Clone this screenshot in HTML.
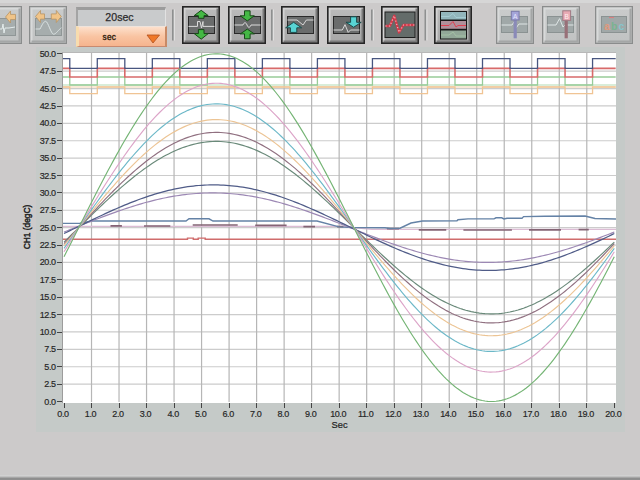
<!DOCTYPE html>
<html><head><meta charset="utf-8">
<style>
*{margin:0;padding:0;box-sizing:border-box}
html,body{width:640px;height:480px;overflow:hidden;background:#cccaca;font-family:"Liberation Sans",sans-serif;position:relative}
.abs{position:absolute}
.topband{left:0;top:0;width:640px;height:3px;background:#d6d6d6}
.panel{left:36.3px;top:47px;width:588.7px;height:384.6px;background:#c5cac8}
.bottom{left:0;top:474.5px;width:640px;height:5.5px;background:linear-gradient(#d2d2d2 0px,#d0d0d0 1px,#b2b2b2 2px,#8e8e8e 3.5px,#888 4.2px,#a6a6a6 5.5px)}
.ylab{position:absolute;left:27.6px;width:28px;text-align:right;font-size:9px;letter-spacing:-0.4px;color:#262626;line-height:10px;-webkit-text-stroke:0.18px #262626}
.ytick{position:absolute;left:57.1px;width:4.9px;height:1px;background:#444}
.xlab{position:absolute;top:408.8px;width:30px;text-align:center;font-size:9px;letter-spacing:-0.4px;color:#262626;line-height:10px;-webkit-text-stroke:0.18px #262626}
.xtick{position:absolute;top:403.4px;width:1px;height:5px;background:#444}
</style></head><body>
<div class="abs topband"></div>
<div class="abs panel"></div>
<div class="abs bottom"></div>
<svg class="abs" style="left:0;top:0" width="640" height="50" viewBox="0 0 640 50"><defs><linearGradient id="g" x1="0" y1="0" x2="0" y2="1"><stop offset="0" stop-color="#bcbcbc"/><stop offset="1" stop-color="#a6a6a6"/></linearGradient><linearGradient id="gd" x1="0" y1="0" x2="0" y2="1"><stop offset="0" stop-color="#cacccc"/><stop offset="1" stop-color="#c0c2c2"/></linearGradient><linearGradient id="og" x1="0" y1="0" x2="0" y2="1"><stop offset="0" stop-color="#fcdcc4"/><stop offset="1" stop-color="#f8b48a"/></linearGradient></defs><rect x="-16" y="6" width="38" height="38" fill="url(#gd)"/><path d="M-13.5,42V8.5H20" stroke="#d8dada" stroke-width="2" fill="none"/><path d="M19.5,8.5V41.5H-13.5" stroke="#a4a6a6" stroke-width="2" fill="none"/><rect x="-15.4" y="6.6" width="36.8" height="36.8" fill="none" stroke="#8a8c8c" stroke-width="1.2"/><rect x="-1.5" y="18.5" width="17" height="17" fill="#a6adad" stroke="#8f9696" stroke-width="1"/><path d="M-2,29 L2,29 L3,24 L4,33 L5,28 L9,28 L15,27" stroke="#e4ecec" stroke-width="1" fill="none"/><polygon points="5.5,17.0 10.5,11.0 10.5,14.4 15.5,14.4 15.5,19.6 10.5,19.6 10.5,23.0" fill="#f0c488" stroke="#b89464" stroke-width="0.8" stroke-linejoin="round"/><rect x="29" y="6" width="38" height="38" fill="url(#gd)"/><path d="M31.5,42V8.5H65" stroke="#d8dada" stroke-width="2" fill="none"/><path d="M64.5,8.5V41.5H31.5" stroke="#a4a6a6" stroke-width="2" fill="none"/><rect x="29.6" y="6.6" width="36.8" height="36.8" fill="none" stroke="#8a8c8c" stroke-width="1.2"/><rect x="35.5" y="18.5" width="26" height="17" fill="#a6adad" stroke="#8f9696" stroke-width="1"/><path d="M35.5,29 L40,29 C42,25 44,21 45.7,21.3 C48,21.5 51,34 53.5,34.2 C56,34.4 59,29 61.5,27.8" stroke="#e0e8e8" stroke-width="0.9" fill="none"/><polygon points="35.5,16.5 40.5,10.5 40.5,13.9 44.5,13.9 44.5,19.1 40.5,19.1 40.5,22.5" fill="#f0c488" stroke="#b89464" stroke-width="0.8" stroke-linejoin="round"/><polygon points="61.3,16.5 56.3,10.5 56.3,13.9 51.3,13.9 51.3,19.1 56.3,19.1 56.3,22.5" fill="#f0c488" stroke="#b89464" stroke-width="0.8" stroke-linejoin="round"/><rect x="172.0" y="9.5" width="1.8" height="31" fill="#8e9090"/><rect x="173.8" y="9.5" width="1.2" height="31" fill="#e0e0e0"/><rect x="182" y="6" width="38" height="38" fill="url(#g)"/><path d="M184.5,42V8.5H218" stroke="#d4d4d4" stroke-width="2" fill="none"/><path d="M217.5,8.5V41.5H184.5" stroke="#7a7a7a" stroke-width="2" fill="none"/><rect x="182.8" y="6.8" width="36.4" height="36.4" fill="none" stroke="#262626" stroke-width="1.6"/><rect x="188.5" y="16.5" width="26" height="17" fill="#6a6c6c" stroke="#2a2a2a" stroke-width="1"/><path d="M188.5,26.4 H197.5 V21.5 H200 L201.5,28 L203,21.5 V26.4 H214.5" stroke="#dcdcdc" stroke-width="1" fill="none"/><polygon points="201.2,10.3 208.2,15.6 204.0,15.6 204.0,18.3 198.4,18.3 198.4,15.6 194.2,15.6" fill="#44b844" stroke="#184818" stroke-width="1" stroke-linejoin="round"/><polygon points="201.2,39.2 208.2,33.6 204.0,33.6 204.0,29.6 198.4,29.6 198.4,33.6 194.2,33.6" fill="#44b844" stroke="#184818" stroke-width="1" stroke-linejoin="round"/><rect x="228" y="6" width="38" height="38" fill="url(#g)"/><path d="M230.5,42V8.5H264" stroke="#d4d4d4" stroke-width="2" fill="none"/><path d="M263.5,8.5V41.5H230.5" stroke="#7a7a7a" stroke-width="2" fill="none"/><rect x="228.8" y="6.8" width="36.4" height="36.4" fill="none" stroke="#262626" stroke-width="1.6"/><rect x="234.5" y="16.5" width="26" height="17" fill="#6a6c6c" stroke="#2a2a2a" stroke-width="1"/><path d="M234.5,25 H243 C244,22 246,22 247,25 C248,28 250,28 251,25 H260.5" stroke="#dcdcdc" stroke-width="1" fill="none"/><polygon points="247.3,20.9 254.3,15.8 250.1,15.8 250.1,10.8 244.5,10.8 244.5,15.8 240.3,15.8" fill="#44b844" stroke="#184818" stroke-width="1" stroke-linejoin="round"/><polygon points="247.3,29.1 254.3,33.9 250.1,33.9 250.1,38.8 244.5,38.8 244.5,33.9 240.3,33.9" fill="#44b844" stroke="#184818" stroke-width="1" stroke-linejoin="round"/><rect x="271.0" y="9.5" width="1.8" height="31" fill="#8e9090"/><rect x="272.8" y="9.5" width="1.2" height="31" fill="#e0e0e0"/><rect x="281" y="6" width="38" height="38" fill="url(#g)"/><path d="M283.5,42V8.5H317" stroke="#d4d4d4" stroke-width="2" fill="none"/><path d="M316.5,8.5V41.5H283.5" stroke="#7a7a7a" stroke-width="2" fill="none"/><rect x="281.8" y="6.8" width="36.4" height="36.4" fill="none" stroke="#262626" stroke-width="1.6"/><rect x="287.5" y="16.5" width="26" height="17" fill="#6a6c6c" stroke="#2a2a2a" stroke-width="1"/><path d="M287.5,20 H297 L303,25 L306.4,20 H313.5" stroke="#d8d8d8" stroke-width="1" fill="none"/><polygon points="293.6,22.3 301.6,27.8 296.8,27.8 296.8,32.4 290.4,32.4 290.4,27.8 285.6,27.8" fill="#58d4d4" stroke="#1c4a4a" stroke-width="1" stroke-linejoin="round"/><rect x="327" y="6" width="38" height="38" fill="url(#g)"/><path d="M329.5,42V8.5H363" stroke="#d4d4d4" stroke-width="2" fill="none"/><path d="M362.5,8.5V41.5H329.5" stroke="#7a7a7a" stroke-width="2" fill="none"/><rect x="327.8" y="6.8" width="36.4" height="36.4" fill="none" stroke="#262626" stroke-width="1.6"/><rect x="333.5" y="16.5" width="26" height="17" fill="#6a6c6c" stroke="#2a2a2a" stroke-width="1"/><path d="M333.5,30 H342.3 L345,24.6 L348.2,32.4 L350.5,30 H359.5" stroke="#d8d8d8" stroke-width="1" fill="none"/><polygon points="353.6,27.3 361.2,22.3 356.6,22.3 356.6,16.8 350.6,16.8 350.6,22.3 346.0,22.3" fill="#58d4d4" stroke="#1c4a4a" stroke-width="1" stroke-linejoin="round"/><rect x="371.0" y="9.5" width="1.8" height="31" fill="#8e9090"/><rect x="372.8" y="9.5" width="1.2" height="31" fill="#e0e0e0"/><rect x="381" y="6" width="38" height="38" fill="url(#g)"/><path d="M383.5,42V8.5H417" stroke="#d4d4d4" stroke-width="2" fill="none"/><path d="M416.5,8.5V41.5H383.5" stroke="#7a7a7a" stroke-width="2" fill="none"/><rect x="381.8" y="6.8" width="36.4" height="36.4" fill="none" stroke="#262626" stroke-width="1.6"/><rect x="385.0" y="12.0" width="30.0" height="25.5" fill="#646c6a" stroke="#1e1e1e" stroke-width="1"/><path d="M385.5,26 H389.8 L394.3,15.8 L399,32.4 L403.5,25 H414.5" stroke="#d23a4a" stroke-width="2.4" fill="none" stroke-linejoin="round"/><path d="M385.5,26 H389.8 L394.3,15.8 L399,32.4 L403.5,25 H414.5" stroke="#f6c4cc" stroke-width="1.1" fill="none" stroke-dasharray="1.1 2.3"/><rect x="424.5" y="9.5" width="1.8" height="31" fill="#8e9090"/><rect x="426.3" y="9.5" width="1.2" height="31" fill="#e0e0e0"/><rect x="434" y="6" width="38" height="38" fill="url(#g)"/><path d="M436.5,42V8.5H470" stroke="#d4d4d4" stroke-width="2" fill="none"/><path d="M469.5,8.5V41.5H436.5" stroke="#7a7a7a" stroke-width="2" fill="none"/><rect x="434.8" y="6.8" width="36.4" height="36.4" fill="none" stroke="#262626" stroke-width="1.6"/><rect x="440" y="11" width="27" height="28.5" fill="#181818"/><rect x="441" y="12" width="25" height="7.5" fill="#92b6bc"/><rect x="441" y="21" width="25" height="7.8" fill="#b0909a"/><rect x="441" y="30.5" width="25" height="8" fill="#92a898"/><path d="M441,25.5 H449 L453,21.5 L456,27 L458,25.5 H466" stroke="#e04050" stroke-width="1" fill="none"/><path d="M441,16.5 H449 L453,13.5 L456,17.5 H466" stroke="#a8d0d8" stroke-width="0.8" fill="none"/><path d="M441,35 H449 L453,32 L456,36 H466" stroke="#a8c8a8" stroke-width="0.8" fill="none"/><rect x="496" y="6" width="38" height="38" fill="url(#gd)"/><path d="M498.5,42V8.5H532" stroke="#d8dada" stroke-width="2" fill="none"/><path d="M531.5,8.5V41.5H498.5" stroke="#a4a6a6" stroke-width="2" fill="none"/><rect x="496.6" y="6.6" width="36.8" height="36.8" fill="none" stroke="#8a8c8c" stroke-width="1.2"/><rect x="501.5" y="16.5" width="26" height="16" fill="#a0a8a8" stroke="#8a9292" stroke-width="1"/><path d="M501.5,25 H512 L514,22 M516,28 L519,24 H527.5" stroke="#dfe6e6" stroke-width="1" fill="none"/><rect x="513.6" y="19" width="3.2" height="19.3" fill="#8a8ab8"/><rect x="511.3" y="11.3" width="7.8" height="8.7" fill="#a4a4d8" stroke="#7a7aa8" stroke-width="1"/><text x="515.2" y="18.5" font-size="6.5" text-anchor="middle" fill="#e8e8ff" font-family="Liberation Sans">A</text><rect x="542" y="6" width="38" height="38" fill="url(#gd)"/><path d="M544.5,42V8.5H578" stroke="#d8dada" stroke-width="2" fill="none"/><path d="M577.5,8.5V41.5H544.5" stroke="#a4a6a6" stroke-width="2" fill="none"/><rect x="542.6" y="6.6" width="36.8" height="36.8" fill="none" stroke="#8a8c8c" stroke-width="1.2"/><rect x="547.5" y="16.5" width="26" height="16" fill="#a0a8a8" stroke="#8a9292" stroke-width="1"/><path d="M547.5,25 H556 L559.6,18.6 L563,27 L565,25 H573.5" stroke="#dfe6e6" stroke-width="1" fill="none"/><rect x="564.6" y="19" width="3.2" height="19.3" fill="#987078"/><rect x="562.8" y="10.8" width="7.8" height="9.6" fill="#e8aab4" stroke="#a07a84" stroke-width="1"/><text x="566.7" y="18.5" font-size="6.5" text-anchor="middle" fill="#fff0f0" font-family="Liberation Sans">B</text><rect x="595" y="6" width="38" height="38" fill="url(#gd)"/><path d="M597.5,42V8.5H631" stroke="#d8dada" stroke-width="2" fill="none"/><path d="M630.5,8.5V41.5H597.5" stroke="#a4a6a6" stroke-width="2" fill="none"/><rect x="595.6" y="6.6" width="36.8" height="36.8" fill="none" stroke="#8a8c8c" stroke-width="1.2"/><rect x="601.5" y="16.5" width="25" height="16" fill="#a0a8a8" stroke="#8a9292" stroke-width="1"/><text x="604" y="29.5" font-size="10.5" fill="#e0987c" font-family="Liberation Sans" font-weight="bold">a</text><text x="611" y="29.5" font-size="10.5" fill="#78b490" font-family="Liberation Sans" font-weight="bold">b</text><text x="618.5" y="29.5" font-size="10.5" fill="#88c4cc" font-family="Liberation Sans" font-weight="bold">c</text><path d="M609,17.5 H614" stroke="#d88080" stroke-width="1.2"/></svg><div class="abs" style="left:76px;top:7px;width:90px;height:20px;background:#c9cbcc;border-top:3px solid #9c9c9c;border-left:2.5px solid #a4a4a4;border-right:1.5px solid #e2e2e2"></div>
<div class="abs" style="left:74.5px;top:9.3px;width:90px;height:17px;font-size:10.6px;color:#2c2c2c;text-align:center;line-height:17px;-webkit-text-stroke:0.25px #2c2c2c">20sec</div>
<div class="abs" style="left:75.5px;top:26px;width:91px;height:21px;background:linear-gradient(#fde0cc,#f9c4a2 50%,#f6b48e);border-left:3px solid #f8dcae;border-right:2px solid #c88a66;border-bottom:1.2px solid #c88a70;border-top:1px solid #efe4dc"></div>
<div class="abs" style="left:102.6px;top:32px;width:20px;font-size:8.2px;letter-spacing:0.2px;color:#2e1c0c;line-height:12px;-webkit-text-stroke:0.35px #2e1c0c">sec</div>
<svg class="abs" style="left:0;top:0" width="640" height="50"><polygon points="147,35 159.5,35 153,43" fill="#f07828" stroke="#b05020" stroke-width="0.8"/></svg>
<div class="abs" style="left:62.4px;top:52px;width:553.4px;height:350.5px;background:#fff;border-left:1.3px solid #9c9c9c;border-top:1px solid #b8b8b8"></div>
<svg class="abs" style="left:0;top:0" width="640" height="480" viewBox="0 0 640 480">
<defs><clipPath id="c"><rect x="63" y="53" width="553" height="349"/></clipPath></defs>
<g clip-path="url(#c)">
<path d="M63,384.12H616 M63,366.73H616 M63,349.35H616 M63,331.96H616 M63,314.57H616 M63,297.19H616 M63,279.81H616 M63,262.42H616 M63,245.03H616 M63,227.65H616 M63,210.27H616 M63,192.88H616 M63,175.50H616 M63,158.11H616 M63,140.73H616 M63,123.34H616 M63,105.95H616 M63,88.57H616 M63,71.19H616" stroke="#cccccc" stroke-width="1.2" fill="none"/>
<path d="M91.52,53V403 M119.03,53V403 M146.55,53V403 M174.06,53V403 M201.57,53V403 M229.09,53V403 M256.61,53V403 M284.12,53V403 M311.63,53V403 M339.15,53V403 M366.67,53V403 M394.18,53V403 M421.69,53V403 M449.21,53V403 M476.73,53V403 M504.24,53V403 M531.75,53V403 M559.27,53V403 M586.78,53V403" stroke="#b6b6b6" stroke-width="1.2" fill="none"/>
<path d="M63,85.0H616" stroke="#b4dcb4" stroke-width="1.2" fill="none"/><path d="M63,87.0H616" stroke="#f4d4b0" stroke-width="1.2" fill="none"/>
<path d="M62.62,87.00 V87.00 H69.78 V93.60 H97.29 V87.00 H124.81 V93.60 H152.32 V87.00 H179.84 V93.60 H207.35 V87.00 H234.87 V93.60 H262.38 V87.00 H289.90 V93.60 H317.41 V87.00 H344.93 V93.60 H372.44 V87.00 H399.96 V93.60 H427.47 V87.00 H454.99 V93.60 H482.50 V87.00 H510.02 V93.60 H537.53 V87.00 H565.05 V93.60 H592.56 V87.00 H615.68" stroke="#f0c494" stroke-width="1.3" fill="none"/>
<path d="M62.62,77.00 V77.00 H69.78 V85.00 H97.29 V77.00 H124.81 V85.00 H152.32 V77.00 H179.84 V85.00 H207.35 V77.00 H234.87 V85.00 H262.38 V77.00 H289.90 V85.00 H317.41 V77.00 H344.93 V85.00 H372.44 V77.00 H399.96 V85.00 H427.47 V77.00 H454.99 V85.00 H482.50 V77.00 H510.02 V85.00 H537.53 V77.00 H565.05 V85.00 H592.56 V77.00 H615.68" stroke="#98cc98" stroke-width="1.3" fill="none"/>
<path d="M62.62,68.40 V68.40 H69.78 V77.00 H97.29 V68.40 H124.81 V77.00 H152.32 V68.40 H179.84 V77.00 H207.35 V68.40 H234.87 V77.00 H262.38 V68.40 H289.90 V77.00 H317.41 V68.40 H344.93 V77.00 H372.44 V68.40 H399.96 V77.00 H427.47 V68.40 H454.99 V77.00 H482.50 V68.40 H510.02 V77.00 H537.53 V68.40 H565.05 V77.00 H592.56 V68.40 H615.68" stroke="#d86a6a" stroke-width="1.6" fill="none"/>
<path d="M62.62,58.60 V58.60 H69.78 V68.40 H97.29 V58.60 H124.81 V68.40 H152.32 V58.60 H179.84 V68.40 H207.35 V58.60 H234.87 V68.40 H262.38 V58.60 H289.90 V68.40 H317.41 V58.60 H344.93 V68.40 H372.44 V58.60 H399.96 V68.40 H427.47 V58.60 H454.99 V68.40 H482.50 V58.60 H510.02 V68.40 H537.53 V58.60 H565.05 V68.40 H592.56 V58.60 H615.68" stroke="#485680" stroke-width="1.3" fill="none"/>
<path d="M63,239.2H187.5V238.1H193.3V239.2H198.2V238.1H205.2V239.2H616" stroke="#d06c6c" stroke-width="1.4" fill="none"/>
<path d="M63,226.3H340L372,229.3H616" stroke="#dcbcd4" stroke-width="1.3" fill="none"/>
<path d="M110.5,225.9H121.9 M144,226.0H170.3 M192.7,225.0H237.7 M255.2,225.4H286.6 M303.4,226.6H315 M337,226.6H343.4 M387,228.6H399 M418.75,229.8H446.25 M463.4,230.0H511.9 M529,229.8H561 M578.6,229.6H588.75" stroke="#846474" stroke-width="1.7" fill="none"/>
<path d="M63,223.4 L80,223.3 L92,221 L186,221 L189,218.8 L209,218.8 L213,221 L317,221 L339,226.9 L353,227.5 L385,227.8 L390,228.5 L400,228.2 L411,223 L422.5,221 L457,220.8 L458,219.7 L468,218.9 L494,218.9 L496,217.8 L501.7,217.8 L504,218.9 L507,218.2 L522,218.2 L523.6,216.6 L545,216.2 L585,216 L595,218.5 L616,219" stroke="#6482a6" stroke-width="1.4" fill="none"/>
<path d="M64.00,232.01 L66.75,230.92 L69.50,229.83 L72.25,228.74 L75.01,227.65 L77.76,226.56 L80.51,225.47 L83.26,224.38 L86.01,223.29 L88.76,222.21 L91.52,221.13 L94.27,220.07 L97.02,219.00 L99.77,217.95 L102.52,216.91 L105.27,215.87 L108.02,214.85 L110.78,213.84 L113.53,212.85 L116.28,211.86 L119.03,210.90 L121.78,209.95 L124.53,209.02 L127.28,208.11 L130.04,207.21 L132.79,206.34 L135.54,205.49 L138.29,204.66 L141.04,203.85 L143.79,203.06 L146.55,202.30 L149.30,201.57 L152.05,200.86 L154.80,200.18 L157.55,199.52 L160.30,198.89 L163.05,198.29 L165.81,197.72 L168.56,197.18 L171.31,196.67 L174.06,196.19 L176.81,195.74 L179.56,195.32 L182.31,194.94 L185.07,194.58 L187.82,194.26 L190.57,193.97 L193.32,193.72 L196.07,193.50 L198.82,193.31 L201.57,193.15 L204.33,193.03 L207.08,192.95 L209.83,192.90 L212.58,192.88 L215.33,192.90 L218.08,192.95 L220.84,193.03 L223.59,193.15 L226.34,193.31 L229.09,193.50 L231.84,193.72 L234.59,193.97 L237.34,194.26 L240.10,194.58 L242.85,194.94 L245.60,195.32 L248.35,195.74 L251.10,196.19 L253.85,196.67 L256.61,197.18 L259.36,197.72 L262.11,198.29 L264.86,198.89 L267.61,199.52 L270.36,200.18 L273.11,200.86 L275.87,201.57 L278.62,202.30 L281.37,203.06 L284.12,203.85 L286.87,204.66 L289.62,205.49 L292.37,206.34 L295.13,207.21 L297.88,208.11 L300.63,209.02 L303.38,209.95 L306.13,210.90 L308.88,211.86 L311.63,212.85 L314.39,213.84 L317.14,214.85 L319.89,215.87 L322.64,216.91 L325.39,217.95 L328.14,219.00 L330.90,220.07 L333.65,221.13 L336.40,222.21 L339.15,223.29 L341.90,224.38 L344.65,225.47 L347.40,226.56 L350.16,227.65 L352.91,228.74 L355.66,229.83 L358.41,230.92 L361.16,232.01 L363.91,233.09 L366.67,234.17 L369.42,235.23 L372.17,236.30 L374.92,237.35 L377.67,238.39 L380.42,239.43 L383.17,240.45 L385.93,241.46 L388.68,242.45 L391.43,243.44 L394.18,244.40 L396.93,245.35 L399.68,246.28 L402.43,247.19 L405.19,248.09 L407.94,248.96 L410.69,249.81 L413.44,250.64 L416.19,251.45 L418.94,252.24 L421.69,253.00 L424.45,253.73 L427.20,254.44 L429.95,255.12 L432.70,255.78 L435.45,256.41 L438.20,257.01 L440.96,257.58 L443.71,258.12 L446.46,258.63 L449.21,259.11 L451.96,259.56 L454.71,259.98 L457.46,260.36 L460.22,260.72 L462.97,261.04 L465.72,261.33 L468.47,261.58 L471.22,261.80 L473.97,261.99 L476.73,262.15 L479.48,262.27 L482.23,262.35 L484.98,262.40 L487.73,262.42 L490.48,262.40 L493.23,262.35 L495.99,262.27 L498.74,262.15 L501.49,261.99 L504.24,261.80 L506.99,261.58 L509.74,261.33 L512.49,261.04 L515.25,260.72 L518.00,260.36 L520.75,259.98 L523.50,259.56 L526.25,259.11 L529.00,258.63 L531.75,258.12 L534.51,257.58 L537.26,257.01 L540.01,256.41 L542.76,255.78 L545.51,255.12 L548.26,254.44 L551.02,253.73 L553.77,253.00 L556.52,252.24 L559.27,251.45 L562.02,250.64 L564.77,249.81 L567.52,248.96 L570.28,248.09 L573.03,247.19 L575.78,246.28 L578.53,245.35 L581.28,244.40 L584.03,243.44 L586.78,242.45 L589.54,241.46 L592.29,240.45 L595.04,239.43 L597.79,238.39 L600.54,237.35 L603.29,236.30 L606.05,235.23 L608.80,234.17 L611.55,233.09 L614.30,232.01" stroke="#9c88b4" stroke-width="1.15" fill="none"/>
<path d="M64.00,233.54 L66.75,232.21 L69.50,230.87 L72.25,229.53 L75.01,228.19 L77.76,226.84 L80.51,225.50 L83.26,224.16 L86.01,222.82 L88.76,221.49 L91.52,220.16 L94.27,218.85 L97.02,217.54 L99.77,216.24 L102.52,214.95 L105.27,213.67 L108.02,212.41 L110.78,211.16 L113.53,209.93 L116.28,208.71 L119.03,207.52 L121.78,206.34 L124.53,205.19 L127.28,204.06 L130.04,202.95 L132.79,201.86 L135.54,200.81 L138.29,199.77 L141.04,198.77 L143.79,197.79 L146.55,196.84 L149.30,195.93 L152.05,195.04 L154.80,194.19 L157.55,193.37 L160.30,192.58 L163.05,191.83 L165.81,191.12 L168.56,190.43 L171.31,189.79 L174.06,189.19 L176.81,188.62 L179.56,188.09 L182.31,187.60 L185.07,187.15 L187.82,186.73 L190.57,186.36 L193.32,186.03 L196.07,185.74 L198.82,185.50 L201.57,185.29 L204.33,185.13 L207.08,185.00 L209.83,184.92 L212.58,184.89 L215.33,184.89 L218.08,184.94 L220.84,185.03 L223.59,185.16 L226.34,185.33 L229.09,185.54 L231.84,185.80 L234.59,186.10 L237.34,186.43 L240.10,186.81 L242.85,187.23 L245.60,187.69 L248.35,188.19 L251.10,188.73 L253.85,189.30 L256.61,189.92 L259.36,190.57 L262.11,191.26 L264.86,191.98 L267.61,192.74 L270.36,193.53 L273.11,194.36 L275.87,195.22 L278.62,196.11 L281.37,197.03 L284.12,197.98 L286.87,198.97 L289.62,199.98 L292.37,201.02 L295.13,202.08 L297.88,203.17 L300.63,204.28 L303.38,205.42 L306.13,206.58 L308.88,207.76 L311.63,208.96 L314.39,210.17 L317.14,211.41 L319.89,212.66 L322.64,213.92 L325.39,215.20 L328.14,216.49 L330.90,217.80 L333.65,219.11 L336.40,220.43 L339.15,221.76 L341.90,223.09 L344.65,224.43 L347.40,225.77 L350.16,227.11 L352.91,228.46 L355.66,229.80 L358.41,231.14 L361.16,232.48 L363.91,233.81 L366.67,235.14 L369.42,236.45 L372.17,237.76 L374.92,239.06 L377.67,240.35 L380.42,241.63 L383.17,242.89 L385.93,244.14 L388.68,245.37 L391.43,246.59 L394.18,247.78 L396.93,248.96 L399.68,250.11 L402.43,251.24 L405.19,252.35 L407.94,253.44 L410.69,254.49 L413.44,255.53 L416.19,256.53 L418.94,257.51 L421.69,258.46 L424.45,259.37 L427.20,260.26 L429.95,261.11 L432.70,261.93 L435.45,262.72 L438.20,263.47 L440.96,264.18 L443.71,264.87 L446.46,265.51 L449.21,266.11 L451.96,266.68 L454.71,267.21 L457.46,267.70 L460.22,268.15 L462.97,268.57 L465.72,268.94 L468.47,269.27 L471.22,269.56 L473.97,269.80 L476.73,270.01 L479.48,270.17 L482.23,270.30 L484.98,270.38 L487.73,270.41 L490.48,270.41 L493.23,270.36 L495.99,270.27 L498.74,270.14 L501.49,269.97 L504.24,269.76 L506.99,269.50 L509.74,269.20 L512.49,268.87 L515.25,268.49 L518.00,268.07 L520.75,267.61 L523.50,267.11 L526.25,266.57 L529.00,266.00 L531.75,265.38 L534.51,264.73 L537.26,264.04 L540.01,263.32 L542.76,262.56 L545.51,261.77 L548.26,260.94 L551.02,260.08 L553.77,259.19 L556.52,258.27 L559.27,257.32 L562.02,256.33 L564.77,255.32 L567.52,254.28 L570.28,253.22 L573.03,252.13 L575.78,251.02 L578.53,249.88 L581.28,248.72 L584.03,247.54 L586.78,246.34 L589.54,245.13 L592.29,243.89 L595.04,242.64 L597.79,241.38 L600.54,240.10 L603.29,238.81 L606.05,237.50 L608.80,236.19 L611.55,234.87 L614.30,233.54" stroke="#505c88" stroke-width="1.25" fill="none"/>
<path d="M64.00,242.07 L66.75,239.40 L69.50,236.71 L72.25,234.01 L75.01,231.31 L77.76,228.60 L80.51,225.89 L83.26,223.18 L86.01,220.48 L88.76,217.78 L91.52,215.10 L94.27,212.42 L97.02,209.77 L99.77,207.13 L102.52,204.50 L105.27,201.91 L108.02,199.33 L110.78,196.79 L113.53,194.28 L116.28,191.80 L119.03,189.35 L121.78,186.94 L124.53,184.57 L127.28,182.25 L130.04,179.97 L132.79,177.74 L135.54,175.55 L138.29,173.42 L141.04,171.34 L143.79,169.32 L146.55,167.35 L149.30,165.44 L152.05,163.60 L154.80,161.82 L157.55,160.10 L160.30,158.45 L163.05,156.87 L165.81,155.36 L168.56,153.92 L171.31,152.55 L174.06,151.25 L176.81,150.04 L179.56,148.89 L182.31,147.83 L185.07,146.84 L187.82,145.94 L190.57,145.11 L193.32,144.37 L196.07,143.71 L198.82,143.13 L201.57,142.64 L204.33,142.22 L207.08,141.90 L209.83,141.66 L212.58,141.50 L215.33,141.43 L218.08,141.44 L220.84,141.54 L223.59,141.72 L226.34,141.99 L229.09,142.34 L231.84,142.78 L234.59,143.30 L237.34,143.90 L240.10,144.58 L242.85,145.35 L245.60,146.20 L248.35,147.13 L251.10,148.14 L253.85,149.23 L256.61,150.39 L259.36,151.63 L262.11,152.95 L264.86,154.34 L267.61,155.80 L270.36,157.34 L273.11,158.94 L275.87,160.61 L278.62,162.35 L281.37,164.15 L284.12,166.01 L286.87,167.93 L289.62,169.92 L292.37,171.96 L295.13,174.05 L297.88,176.20 L300.63,178.40 L303.38,180.65 L306.13,182.94 L308.88,185.28 L311.63,187.66 L314.39,190.08 L317.14,192.54 L319.89,195.03 L322.64,197.55 L325.39,200.10 L328.14,202.68 L330.90,205.29 L333.65,207.92 L336.40,210.56 L339.15,213.23 L341.90,215.90 L344.65,218.59 L347.40,221.29 L350.16,223.99 L352.91,226.70 L355.66,229.41 L358.41,232.12 L361.16,234.82 L363.91,237.52 L366.67,240.20 L369.42,242.88 L372.17,245.53 L374.92,248.17 L377.67,250.80 L380.42,253.39 L383.17,255.97 L385.93,258.51 L388.68,261.02 L391.43,263.50 L394.18,265.95 L396.93,268.36 L399.68,270.73 L402.43,273.05 L405.19,275.33 L407.94,277.56 L410.69,279.75 L413.44,281.88 L416.19,283.96 L418.94,285.98 L421.69,287.95 L424.45,289.86 L427.20,291.70 L429.95,293.48 L432.70,295.20 L435.45,296.85 L438.20,298.43 L440.96,299.94 L443.71,301.38 L446.46,302.75 L449.21,304.05 L451.96,305.26 L454.71,306.41 L457.46,307.47 L460.22,308.46 L462.97,309.36 L465.72,310.19 L468.47,310.93 L471.22,311.59 L473.97,312.17 L476.73,312.66 L479.48,313.08 L482.23,313.40 L484.98,313.64 L487.73,313.80 L490.48,313.87 L493.23,313.86 L495.99,313.76 L498.74,313.58 L501.49,313.31 L504.24,312.96 L506.99,312.52 L509.74,312.00 L512.49,311.40 L515.25,310.72 L518.00,309.95 L520.75,309.10 L523.50,308.17 L526.25,307.16 L529.00,306.07 L531.75,304.91 L534.51,303.67 L537.26,302.35 L540.01,300.96 L542.76,299.50 L545.51,297.96 L548.26,296.36 L551.02,294.69 L553.77,292.95 L556.52,291.15 L559.27,289.29 L562.02,287.37 L564.77,285.38 L567.52,283.34 L570.28,281.25 L573.03,279.10 L575.78,276.90 L578.53,274.65 L581.28,272.36 L584.03,270.02 L586.78,267.64 L589.54,265.22 L592.29,262.76 L595.04,260.27 L597.79,257.75 L600.54,255.20 L603.29,252.62 L606.05,250.01 L608.80,247.38 L611.55,244.74 L614.30,242.07" stroke="#6a8a7a" stroke-width="1.15" fill="none"/>
<path d="M64.00,243.59 L66.75,240.63 L69.50,237.66 L72.25,234.68 L75.01,231.69 L77.76,228.70 L80.51,225.70 L83.26,222.71 L86.01,219.73 L88.76,216.75 L91.52,213.78 L94.27,210.83 L97.02,207.89 L99.77,204.97 L102.52,202.08 L105.27,199.21 L108.02,196.37 L110.78,193.55 L113.53,190.78 L116.28,188.04 L119.03,185.33 L121.78,182.67 L124.53,180.06 L127.28,177.49 L130.04,174.97 L132.79,172.50 L135.54,170.09 L138.29,167.73 L141.04,165.44 L143.79,163.20 L146.55,161.03 L149.30,158.92 L152.05,156.88 L154.80,154.92 L157.55,153.02 L160.30,151.20 L163.05,149.45 L165.81,147.78 L168.56,146.19 L171.31,144.67 L174.06,143.24 L176.81,141.90 L179.56,140.64 L182.31,139.46 L185.07,138.37 L187.82,137.37 L190.57,136.46 L193.32,135.64 L196.07,134.91 L198.82,134.27 L201.57,133.72 L204.33,133.27 L207.08,132.91 L209.83,132.64 L212.58,132.47 L215.33,132.39 L218.08,132.40 L220.84,132.51 L223.59,132.71 L226.34,133.01 L229.09,133.39 L231.84,133.88 L234.59,134.45 L237.34,135.12 L240.10,135.88 L242.85,136.72 L245.60,137.66 L248.35,138.69 L251.10,139.80 L253.85,141.01 L256.61,142.29 L259.36,143.66 L262.11,145.12 L264.86,146.65 L267.61,148.27 L270.36,149.96 L273.11,151.73 L275.87,153.58 L278.62,155.50 L281.37,157.49 L284.12,159.55 L286.87,161.67 L289.62,163.86 L292.37,166.12 L295.13,168.43 L297.88,170.81 L300.63,173.24 L303.38,175.72 L306.13,178.26 L308.88,180.84 L311.63,183.47 L314.39,186.14 L317.14,188.85 L319.89,191.61 L322.64,194.39 L325.39,197.22 L328.14,200.07 L330.90,202.94 L333.65,205.85 L336.40,208.77 L339.15,211.71 L341.90,214.67 L344.65,217.64 L347.40,220.62 L350.16,223.61 L352.91,226.60 L355.66,229.60 L358.41,232.59 L361.16,235.57 L363.91,238.55 L366.67,241.52 L369.42,244.47 L372.17,247.41 L374.92,250.33 L377.67,253.22 L380.42,256.09 L383.17,258.93 L385.93,261.75 L388.68,264.52 L391.43,267.26 L394.18,269.97 L396.93,272.63 L399.68,275.24 L402.43,277.81 L405.19,280.33 L407.94,282.80 L410.69,285.21 L413.44,287.57 L416.19,289.86 L418.94,292.10 L421.69,294.27 L424.45,296.38 L427.20,298.42 L429.95,300.38 L432.70,302.28 L435.45,304.10 L438.20,305.85 L440.96,307.52 L443.71,309.11 L446.46,310.63 L449.21,312.06 L451.96,313.40 L454.71,314.66 L457.46,315.84 L460.22,316.93 L462.97,317.93 L465.72,318.84 L468.47,319.66 L471.22,320.39 L473.97,321.03 L476.73,321.58 L479.48,322.03 L482.23,322.39 L484.98,322.66 L487.73,322.83 L490.48,322.91 L493.23,322.90 L495.99,322.79 L498.74,322.59 L501.49,322.29 L504.24,321.91 L506.99,321.42 L509.74,320.85 L512.49,320.18 L515.25,319.42 L518.00,318.58 L520.75,317.64 L523.50,316.61 L526.25,315.50 L529.00,314.29 L531.75,313.01 L534.51,311.64 L537.26,310.18 L540.01,308.65 L542.76,307.03 L545.51,305.34 L548.26,303.57 L551.02,301.72 L553.77,299.80 L556.52,297.81 L559.27,295.75 L562.02,293.63 L564.77,291.44 L567.52,289.18 L570.28,286.87 L573.03,284.49 L575.78,282.06 L578.53,279.58 L581.28,277.04 L584.03,274.46 L586.78,271.83 L589.54,269.16 L592.29,266.45 L595.04,263.69 L597.79,260.91 L600.54,258.08 L603.29,255.23 L606.05,252.36 L608.80,249.45 L611.55,246.53 L614.30,243.59" stroke="#907080" stroke-width="1.15" fill="none"/>
<path d="M64.00,245.73 L66.75,242.37 L69.50,239.00 L72.25,235.62 L75.01,232.23 L77.76,228.84 L80.51,225.44 L83.26,222.05 L86.01,218.66 L88.76,215.29 L91.52,211.92 L94.27,208.57 L97.02,205.24 L99.77,201.93 L102.52,198.64 L105.27,195.39 L108.02,192.16 L110.78,188.98 L113.53,185.83 L116.28,182.72 L119.03,179.65 L121.78,176.63 L124.53,173.67 L127.28,170.75 L130.04,167.89 L132.79,165.10 L135.54,162.36 L138.29,159.69 L141.04,157.08 L143.79,154.54 L146.55,152.08 L149.30,149.69 L152.05,147.38 L154.80,145.15 L157.55,143.00 L160.30,140.93 L163.05,138.94 L165.81,137.05 L168.56,135.24 L171.31,133.53 L174.06,131.91 L176.81,130.38 L179.56,128.95 L182.31,127.62 L185.07,126.38 L187.82,125.25 L190.57,124.21 L193.32,123.28 L196.07,122.45 L198.82,121.73 L201.57,121.11 L204.33,120.59 L207.08,120.18 L209.83,119.88 L212.58,119.68 L215.33,119.59 L218.08,119.61 L220.84,119.73 L223.59,119.96 L226.34,120.29 L229.09,120.74 L231.84,121.28 L234.59,121.93 L237.34,122.69 L240.10,123.55 L242.85,124.51 L245.60,125.58 L248.35,126.74 L251.10,128.01 L253.85,129.37 L256.61,130.83 L259.36,132.39 L262.11,134.03 L264.86,135.78 L267.61,137.61 L270.36,139.53 L273.11,141.54 L275.87,143.63 L278.62,145.81 L281.37,148.07 L284.12,150.40 L286.87,152.81 L289.62,155.30 L292.37,157.86 L295.13,160.48 L297.88,163.17 L300.63,165.93 L303.38,168.75 L306.13,171.62 L308.88,174.55 L311.63,177.53 L314.39,180.57 L317.14,183.64 L319.89,186.77 L322.64,189.93 L325.39,193.13 L328.14,196.36 L330.90,199.63 L333.65,202.92 L336.40,206.23 L339.15,209.57 L341.90,212.93 L344.65,216.30 L347.40,219.68 L350.16,223.07 L352.91,226.46 L355.66,229.86 L358.41,233.25 L361.16,236.64 L363.91,240.01 L366.67,243.38 L369.42,246.73 L372.17,250.06 L374.92,253.37 L377.67,256.66 L380.42,259.91 L383.17,263.14 L385.93,266.32 L388.68,269.47 L391.43,272.58 L394.18,275.65 L396.93,278.67 L399.68,281.63 L402.43,284.55 L405.19,287.41 L407.94,290.20 L410.69,292.94 L413.44,295.61 L416.19,298.22 L418.94,300.76 L421.69,303.22 L424.45,305.61 L427.20,307.92 L429.95,310.15 L432.70,312.30 L435.45,314.37 L438.20,316.36 L440.96,318.25 L443.71,320.06 L446.46,321.77 L449.21,323.39 L451.96,324.92 L454.71,326.35 L457.46,327.68 L460.22,328.92 L462.97,330.05 L465.72,331.09 L468.47,332.02 L471.22,332.85 L473.97,333.57 L476.73,334.19 L479.48,334.71 L482.23,335.12 L484.98,335.42 L487.73,335.62 L490.48,335.71 L493.23,335.69 L495.99,335.57 L498.74,335.34 L501.49,335.01 L504.24,334.56 L506.99,334.02 L509.74,333.37 L512.49,332.61 L515.25,331.75 L518.00,330.79 L520.75,329.72 L523.50,328.56 L526.25,327.29 L529.00,325.93 L531.75,324.47 L534.51,322.91 L537.26,321.27 L540.01,319.52 L542.76,317.69 L545.51,315.77 L548.26,313.76 L551.02,311.67 L553.77,309.49 L556.52,307.23 L559.27,304.90 L562.02,302.49 L564.77,300.00 L567.52,297.44 L570.28,294.82 L573.03,292.13 L575.78,289.37 L578.53,286.55 L581.28,283.68 L584.03,280.75 L586.78,277.77 L589.54,274.73 L592.29,271.66 L595.04,268.53 L597.79,265.37 L600.54,262.17 L603.29,258.94 L606.05,255.67 L608.80,252.38 L611.55,249.07 L614.30,245.73" stroke="#ecc494" stroke-width="1.15" fill="none"/>
<path d="M64.00,248.36 L66.75,244.51 L69.50,240.65 L72.25,236.78 L75.01,232.90 L77.76,229.01 L80.51,225.12 L83.26,221.24 L86.01,217.36 L88.76,213.49 L91.52,209.63 L94.27,205.79 L97.02,201.98 L99.77,198.19 L102.52,194.43 L105.27,190.70 L108.02,187.00 L110.78,183.35 L113.53,179.74 L116.28,176.18 L119.03,172.67 L121.78,169.21 L124.53,165.82 L127.28,162.48 L130.04,159.20 L132.79,156.00 L135.54,152.86 L138.29,149.80 L141.04,146.82 L143.79,143.91 L146.55,141.09 L149.30,138.35 L152.05,135.71 L154.80,133.15 L157.55,130.68 L160.30,128.31 L163.05,126.04 L165.81,123.87 L168.56,121.81 L171.31,119.84 L174.06,117.98 L176.81,116.24 L179.56,114.60 L182.31,113.07 L185.07,111.65 L187.82,110.35 L190.57,109.17 L193.32,108.10 L196.07,107.15 L198.82,106.32 L201.57,105.61 L204.33,105.02 L207.08,104.55 L209.83,104.21 L212.58,103.98 L215.33,103.88 L218.08,103.89 L220.84,104.04 L223.59,104.30 L226.34,104.68 L229.09,105.19 L231.84,105.81 L234.59,106.56 L237.34,107.43 L240.10,108.41 L242.85,109.51 L245.60,110.73 L248.35,112.07 L251.10,113.52 L253.85,115.08 L256.61,116.75 L259.36,118.53 L262.11,120.42 L264.86,122.42 L267.61,124.51 L270.36,126.71 L273.11,129.02 L275.87,131.41 L278.62,133.91 L281.37,136.49 L284.12,139.17 L286.87,141.93 L289.62,144.78 L292.37,147.70 L295.13,150.71 L297.88,153.80 L300.63,156.95 L303.38,160.18 L306.13,163.47 L308.88,166.83 L311.63,170.25 L314.39,173.72 L317.14,177.24 L319.89,180.82 L322.64,184.44 L325.39,188.11 L328.14,191.81 L330.90,195.55 L333.65,199.32 L336.40,203.12 L339.15,206.94 L341.90,210.79 L344.65,214.65 L347.40,218.52 L350.16,222.40 L352.91,226.29 L355.66,230.18 L358.41,234.06 L361.16,237.94 L363.91,241.81 L366.67,245.67 L369.42,249.51 L372.17,253.32 L374.92,257.11 L377.67,260.87 L380.42,264.60 L383.17,268.30 L385.93,271.95 L388.68,275.56 L391.43,279.12 L394.18,282.63 L396.93,286.09 L399.68,289.48 L402.43,292.82 L405.19,296.10 L407.94,299.30 L410.69,302.44 L413.44,305.50 L416.19,308.48 L418.94,311.39 L421.69,314.21 L424.45,316.95 L427.20,319.59 L429.95,322.15 L432.70,324.62 L435.45,326.99 L438.20,329.26 L440.96,331.43 L443.71,333.49 L446.46,335.46 L449.21,337.32 L451.96,339.06 L454.71,340.70 L457.46,342.23 L460.22,343.65 L462.97,344.95 L465.72,346.13 L468.47,347.20 L471.22,348.15 L473.97,348.98 L476.73,349.69 L479.48,350.28 L482.23,350.75 L484.98,351.09 L487.73,351.32 L490.48,351.42 L493.23,351.41 L495.99,351.26 L498.74,351.00 L501.49,350.62 L504.24,350.11 L506.99,349.49 L509.74,348.74 L512.49,347.87 L515.25,346.89 L518.00,345.79 L520.75,344.57 L523.50,343.23 L526.25,341.78 L529.00,340.22 L531.75,338.55 L534.51,336.77 L537.26,334.88 L540.01,332.88 L542.76,330.79 L545.51,328.59 L548.26,326.28 L551.02,323.89 L553.77,321.39 L556.52,318.81 L559.27,316.13 L562.02,313.37 L564.77,310.52 L567.52,307.60 L570.28,304.59 L573.03,301.50 L575.78,298.35 L578.53,295.12 L581.28,291.83 L584.03,288.47 L586.78,285.05 L589.54,281.58 L592.29,278.06 L595.04,274.48 L597.79,270.86 L600.54,267.19 L603.29,263.49 L606.05,259.75 L608.80,255.98 L611.55,252.18 L614.30,248.36" stroke="#6cb8c8" stroke-width="1.15" fill="none"/>
<path d="M64.00,251.81 L66.75,247.33 L69.50,242.82 L72.25,238.30 L75.01,233.77 L77.76,229.24 L80.51,224.70 L83.26,220.17 L86.01,215.64 L88.76,211.12 L91.52,206.63 L94.27,202.15 L97.02,197.69 L99.77,193.27 L102.52,188.88 L105.27,184.53 L108.02,180.22 L110.78,175.96 L113.53,171.75 L116.28,167.59 L119.03,163.50 L121.78,159.46 L124.53,155.50 L127.28,151.60 L130.04,147.78 L132.79,144.04 L135.54,140.39 L138.29,136.81 L141.04,133.33 L143.79,129.94 L146.55,126.65 L149.30,123.46 L152.05,120.36 L154.80,117.38 L157.55,114.50 L160.30,111.74 L163.05,109.09 L165.81,106.56 L168.56,104.15 L171.31,101.85 L174.06,99.69 L176.81,97.65 L179.56,95.73 L182.31,93.95 L185.07,92.30 L187.82,90.78 L190.57,89.40 L193.32,88.16 L196.07,87.05 L198.82,86.08 L201.57,85.25 L204.33,84.56 L207.08,84.01 L209.83,83.61 L212.58,83.35 L215.33,83.22 L218.08,83.25 L220.84,83.41 L223.59,83.72 L226.34,84.16 L229.09,84.75 L231.84,85.48 L234.59,86.36 L237.34,87.37 L240.10,88.52 L242.85,89.80 L245.60,91.22 L248.35,92.78 L251.10,94.47 L253.85,96.29 L256.61,98.24 L259.36,100.32 L262.11,102.53 L264.86,104.86 L267.61,107.31 L270.36,109.87 L273.11,112.56 L275.87,115.36 L278.62,118.26 L281.37,121.28 L284.12,124.40 L286.87,127.63 L289.62,130.95 L292.37,134.37 L295.13,137.88 L297.88,141.47 L300.63,145.16 L303.38,148.92 L306.13,152.76 L308.88,156.68 L311.63,160.67 L314.39,164.72 L317.14,168.83 L319.89,173.01 L322.64,177.23 L325.39,181.51 L328.14,185.83 L330.90,190.19 L333.65,194.59 L336.40,199.03 L339.15,203.49 L341.90,207.97 L344.65,212.48 L347.40,217.00 L350.16,221.53 L352.91,226.06 L355.66,230.60 L358.41,235.13 L361.16,239.66 L363.91,244.18 L366.67,248.67 L369.42,253.15 L372.17,257.61 L374.92,262.03 L377.67,266.42 L380.42,270.77 L383.17,275.08 L385.93,279.34 L388.68,283.55 L391.43,287.71 L394.18,291.80 L396.93,295.84 L399.68,299.80 L402.43,303.70 L405.19,307.52 L407.94,311.26 L410.69,314.91 L413.44,318.49 L416.19,321.97 L418.94,325.36 L421.69,328.65 L424.45,331.84 L427.20,334.94 L429.95,337.92 L432.70,340.80 L435.45,343.56 L438.20,346.21 L440.96,348.74 L443.71,351.15 L446.46,353.45 L449.21,355.61 L451.96,357.65 L454.71,359.57 L457.46,361.35 L460.22,363.00 L462.97,364.52 L465.72,365.90 L468.47,367.14 L471.22,368.25 L473.97,369.22 L476.73,370.05 L479.48,370.74 L482.23,371.29 L484.98,371.69 L487.73,371.95 L490.48,372.08 L493.23,372.05 L495.99,371.89 L498.74,371.58 L501.49,371.14 L504.24,370.55 L506.99,369.82 L509.74,368.94 L512.49,367.93 L515.25,366.78 L518.00,365.50 L520.75,364.08 L523.50,362.52 L526.25,360.83 L529.00,359.01 L531.75,357.06 L534.51,354.98 L537.26,352.77 L540.01,350.44 L542.76,347.99 L545.51,345.43 L548.26,342.74 L551.02,339.94 L553.77,337.04 L556.52,334.02 L559.27,330.90 L562.02,327.67 L564.77,324.35 L567.52,320.93 L570.28,317.42 L573.03,313.83 L575.78,310.14 L578.53,306.38 L581.28,302.54 L584.03,298.62 L586.78,294.63 L589.54,290.58 L592.29,286.47 L595.04,282.29 L597.79,278.07 L600.54,273.79 L603.29,269.47 L606.05,265.11 L608.80,260.71 L611.55,256.27 L614.30,251.81" stroke="#dca4c8" stroke-width="1.15" fill="none"/>
<path d="M64.00,256.73 L66.75,251.33 L69.50,245.91 L72.25,240.47 L75.01,235.02 L77.76,229.56 L80.51,224.10 L83.26,218.64 L86.01,213.19 L88.76,207.76 L91.52,202.34 L94.27,196.95 L97.02,191.59 L99.77,186.27 L102.52,180.99 L105.27,175.75 L108.02,170.56 L110.78,165.43 L113.53,160.36 L116.28,155.36 L119.03,150.43 L121.78,145.58 L124.53,140.80 L127.28,136.12 L130.04,131.52 L132.79,127.02 L135.54,122.61 L138.29,118.31 L141.04,114.12 L143.79,110.04 L146.55,106.08 L149.30,102.24 L152.05,98.52 L154.80,94.92 L157.55,91.46 L160.30,88.13 L163.05,84.95 L165.81,81.90 L168.56,78.99 L171.31,76.23 L174.06,73.63 L176.81,71.17 L179.56,68.87 L182.31,66.72 L185.07,64.74 L187.82,62.91 L190.57,61.25 L193.32,59.75 L196.07,58.41 L198.82,57.25 L201.57,56.25 L204.33,55.42 L207.08,54.76 L209.83,54.27 L212.58,53.96 L215.33,53.81 L218.08,53.84 L220.84,54.03 L223.59,54.40 L226.34,54.94 L229.09,55.65 L231.84,56.53 L234.59,57.58 L237.34,58.80 L240.10,60.18 L242.85,61.73 L245.60,63.44 L248.35,65.31 L251.10,67.35 L253.85,69.54 L256.61,71.89 L259.36,74.39 L262.11,77.05 L264.86,79.85 L267.61,82.80 L270.36,85.89 L273.11,89.12 L275.87,92.49 L278.62,95.99 L281.37,99.62 L284.12,103.38 L286.87,107.26 L289.62,111.25 L292.37,115.37 L295.13,119.59 L297.88,123.92 L300.63,128.36 L303.38,132.89 L306.13,137.51 L308.88,142.23 L311.63,147.03 L314.39,151.90 L317.14,156.86 L319.89,161.88 L322.64,166.97 L325.39,172.11 L328.14,177.31 L330.90,182.57 L333.65,187.86 L336.40,193.20 L339.15,198.57 L341.90,203.97 L344.65,209.39 L347.40,214.83 L350.16,220.28 L352.91,225.74 L355.66,231.20 L358.41,236.66 L361.16,242.11 L363.91,247.54 L366.67,252.96 L369.42,258.35 L372.17,263.71 L374.92,269.03 L377.67,274.31 L380.42,279.55 L383.17,284.74 L385.93,289.87 L388.68,294.94 L391.43,299.94 L394.18,304.87 L396.93,309.72 L399.68,314.50 L402.43,319.18 L405.19,323.78 L407.94,328.28 L410.69,332.69 L413.44,336.99 L416.19,341.18 L418.94,345.26 L421.69,349.22 L424.45,353.06 L427.20,356.78 L429.95,360.38 L432.70,363.84 L435.45,367.17 L438.20,370.35 L440.96,373.40 L443.71,376.31 L446.46,379.07 L449.21,381.67 L451.96,384.13 L454.71,386.43 L457.46,388.58 L460.22,390.56 L462.97,392.39 L465.72,394.05 L468.47,395.55 L471.22,396.89 L473.97,398.05 L476.73,399.05 L479.48,399.88 L482.23,400.54 L484.98,401.03 L487.73,401.34 L490.48,401.49 L493.23,401.46 L495.99,401.27 L498.74,400.90 L501.49,400.36 L504.24,399.65 L506.99,398.77 L509.74,397.72 L512.49,396.50 L515.25,395.12 L518.00,393.57 L520.75,391.86 L523.50,389.99 L526.25,387.95 L529.00,385.76 L531.75,383.41 L534.51,380.91 L537.26,378.25 L540.01,375.45 L542.76,372.50 L545.51,369.41 L548.26,366.18 L551.02,362.81 L553.77,359.31 L556.52,355.68 L559.27,351.92 L562.02,348.04 L564.77,344.05 L567.52,339.93 L570.28,335.71 L573.03,331.38 L575.78,326.94 L578.53,322.41 L581.28,317.79 L584.03,313.07 L586.78,308.27 L589.54,303.40 L592.29,298.44 L595.04,293.42 L597.79,288.33 L600.54,283.19 L603.29,277.99 L606.05,272.73 L608.80,267.44 L611.55,262.10 L614.30,256.73" stroke="#74b474" stroke-width="1.15" fill="none"/>
</g></svg>
<div class="ylab" style="top:396.5px">0.0</div><div class="ytick" style="top:401.0px"></div><div class="ylab" style="top:379.1px">2.5</div><div class="ytick" style="top:383.6px"></div><div class="ylab" style="top:361.7px">5.0</div><div class="ytick" style="top:366.2px"></div><div class="ylab" style="top:344.3px">7.5</div><div class="ytick" style="top:348.8px"></div><div class="ylab" style="top:327.0px">10.0</div><div class="ytick" style="top:331.5px"></div><div class="ylab" style="top:309.6px">12.5</div><div class="ytick" style="top:314.1px"></div><div class="ylab" style="top:292.2px">15.0</div><div class="ytick" style="top:296.7px"></div><div class="ylab" style="top:274.8px">17.5</div><div class="ytick" style="top:279.3px"></div><div class="ylab" style="top:257.4px">20.0</div><div class="ytick" style="top:261.9px"></div><div class="ylab" style="top:240.0px">22.5</div><div class="ytick" style="top:244.5px"></div><div class="ylab" style="top:222.7px">25.0</div><div class="ytick" style="top:227.2px"></div><div class="ylab" style="top:205.3px">27.5</div><div class="ytick" style="top:209.8px"></div><div class="ylab" style="top:187.9px">30.0</div><div class="ytick" style="top:192.4px"></div><div class="ylab" style="top:170.5px">32.5</div><div class="ytick" style="top:175.0px"></div><div class="ylab" style="top:153.1px">35.0</div><div class="ytick" style="top:157.6px"></div><div class="ylab" style="top:135.7px">37.5</div><div class="ytick" style="top:140.2px"></div><div class="ylab" style="top:118.3px">40.0</div><div class="ytick" style="top:122.8px"></div><div class="ylab" style="top:101.0px">42.5</div><div class="ytick" style="top:105.5px"></div><div class="ylab" style="top:83.6px">45.0</div><div class="ytick" style="top:88.1px"></div><div class="ylab" style="top:66.2px">47.5</div><div class="ytick" style="top:70.7px"></div><div class="ylab" style="top:48.8px">50.0</div><div class="ytick" style="top:53.3px"></div><div class="xlab" style="left:48.0px">0.0</div><div class="xtick" style="left:63.5px"></div><div class="xlab" style="left:75.5px">1.0</div><div class="xtick" style="left:91.0px"></div><div class="xlab" style="left:103.0px">2.0</div><div class="xtick" style="left:118.5px"></div><div class="xlab" style="left:130.5px">3.0</div><div class="xtick" style="left:146.0px"></div><div class="xlab" style="left:158.1px">4.0</div><div class="xtick" style="left:173.6px"></div><div class="xlab" style="left:185.6px">5.0</div><div class="xtick" style="left:201.1px"></div><div class="xlab" style="left:213.1px">6.0</div><div class="xtick" style="left:228.6px"></div><div class="xlab" style="left:240.6px">7.0</div><div class="xtick" style="left:256.1px"></div><div class="xlab" style="left:268.1px">8.0</div><div class="xtick" style="left:283.6px"></div><div class="xlab" style="left:295.6px">9.0</div><div class="xtick" style="left:311.1px"></div><div class="xlab" style="left:323.1px">10.0</div><div class="xtick" style="left:338.6px"></div><div class="xlab" style="left:350.7px">11.0</div><div class="xtick" style="left:366.2px"></div><div class="xlab" style="left:378.2px">12.0</div><div class="xtick" style="left:393.7px"></div><div class="xlab" style="left:405.7px">13.0</div><div class="xtick" style="left:421.2px"></div><div class="xlab" style="left:433.2px">14.0</div><div class="xtick" style="left:448.7px"></div><div class="xlab" style="left:460.7px">15.0</div><div class="xtick" style="left:476.2px"></div><div class="xlab" style="left:488.2px">16.0</div><div class="xtick" style="left:503.7px"></div><div class="xlab" style="left:515.8px">17.0</div><div class="xtick" style="left:531.3px"></div><div class="xlab" style="left:543.3px">18.0</div><div class="xtick" style="left:558.8px"></div><div class="xlab" style="left:570.8px">19.0</div><div class="xtick" style="left:586.3px"></div><div class="xlab" style="left:598.3px">20.0</div><div class="xtick" style="left:613.8px"></div><div class="abs" style="left:319.6px;top:420.3px;width:40px;text-align:center;font-size:9.3px;color:#222;line-height:10px;-webkit-text-stroke:0.2px #222">Sec</div><div class="abs" style="left:1.5px;top:222px;width:50px;text-align:center;font-size:8.4px;color:#222;line-height:10px;transform:rotate(-90deg);-webkit-text-stroke:0.45px #222">CH1 (degC)</div></body></html>
